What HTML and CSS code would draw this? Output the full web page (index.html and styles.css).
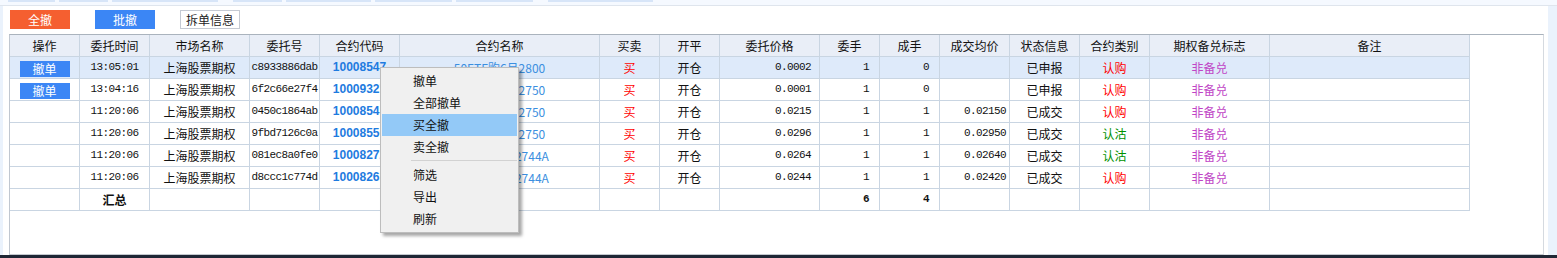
FILE: index.html
```html
<!DOCTYPE html>
<html lang="zh-CN">
<head>
<meta charset="UTF-8" />
<title>委托列表</title>
<link rel="stylesheet" href="styles.css">
</head>
<body>
    <div class="topbar">
        <span class="tab" style="width:47px"></span>
        <span class="tab" style="width:49px"></span>
        <span class="tab" style="width:106px"></span>
        <span class="tab gap" style="width:49px"></span>
        <span class="tab" style="width:85px"></span>
        <span class="tab" style="width:77px"></span>
        <span class="tab" style="width:77px"></span>
        <span class="tab gap" style="width:105px"></span>
    </div>
    <div class="window">
        <div class="toolbar">
            <button class="btn btn-orange">全撤</button>
            <button class="btn btn-blue">批撤</button>
            <button class="btn btn-plain">拆单信息</button>
        </div>
        <div class="panel">
            <table class="grid">
                <colgroup>
                    <col style="width:70px"><col style="width:70px"><col style="width:100px"><col style="width:70px">
                    <col style="width:80px"><col style="width:200px"><col style="width:60px"><col style="width:60px">
                    <col style="width:100px"><col style="width:60px"><col style="width:60px"><col style="width:70px">
                    <col style="width:70px"><col style="width:70px"><col style="width:120px"><col style="width:200px">
                </colgroup>
                <thead>
                    <tr>
                        <th>操作</th><th>委托时间</th><th>市场名称</th><th>委托号</th><th>合约代码</th><th>合约名称</th>
                        <th>买卖</th><th>开平</th><th>委托价格</th><th>委手</th><th>成手</th><th>成交均价</th>
                        <th>状态信息</th><th>合约类别</th><th>期权备兑标志</th><th>备注</th>
                    </tr>
                </thead>
                <tbody>
                    <tr class="selected">
                        <td><span class="cancel">撤单</span></td>
                        <td class="mono">13:05:01</td><td>上海股票期权</td>
                        <td class="mono">c8933886dab</td>
                        <td class="code">10008547</td><td class="name">50ETF购6月2800</td>
                        <td class="red">买</td><td>开仓</td>
                        <td class="mono price">0.0002</td><td class="mono qty">1</td><td class="mono qty">0</td>
                        <td class="mono avg"></td><td>已申报</td><td class="red">认购</td><td class="purple">非备兑</td><td></td>
                    </tr>
                    <tr>
                        <td><span class="cancel">撤单</span></td>
                        <td class="mono">13:04:16</td><td>上海股票期权</td>
                        <td class="mono">6f2c66e27f4</td>
                        <td class="code">10009327</td><td class="name">50ETF购6月2750</td>
                        <td class="red">买</td><td>开仓</td>
                        <td class="mono price">0.0001</td><td class="mono qty">1</td><td class="mono qty">0</td>
                        <td class="mono avg"></td><td>已申报</td><td class="red">认购</td><td class="purple">非备兑</td><td></td>
                    </tr>
                    <tr>
                        <td></td>
                        <td class="mono">11:20:06</td><td>上海股票期权</td>
                        <td class="mono">0450c1864ab</td>
                        <td class="code">10008541</td><td class="name">50ETF购6月2750</td>
                        <td class="red">买</td><td>开仓</td>
                        <td class="mono price">0.0215</td><td class="mono qty">1</td><td class="mono qty">1</td>
                        <td class="mono avg">0.02150</td><td>已成交</td><td class="red">认购</td><td class="purple">非备兑</td><td></td>
                    </tr>
                    <tr>
                        <td></td>
                        <td class="mono">11:20:06</td><td>上海股票期权</td>
                        <td class="mono">9fbd7126c0a</td>
                        <td class="code">10008550</td><td class="name">50ETF沽6月2750</td>
                        <td class="red">买</td><td>开仓</td>
                        <td class="mono price">0.0296</td><td class="mono qty">1</td><td class="mono qty">1</td>
                        <td class="mono avg">0.02950</td><td>已成交</td><td class="green">认沽</td><td class="purple">非备兑</td><td></td>
                    </tr>
                    <tr>
                        <td></td>
                        <td class="mono">11:20:06</td><td>上海股票期权</td>
                        <td class="mono">081ec8a0fe0</td>
                        <td class="code">10008272</td><td class="name">50ETF沽6月2744A</td>
                        <td class="red">买</td><td>开仓</td>
                        <td class="mono price">0.0264</td><td class="mono qty">1</td><td class="mono qty">1</td>
                        <td class="mono avg">0.02640</td><td>已成交</td><td class="green">认沽</td><td class="purple">非备兑</td><td></td>
                    </tr>
                    <tr>
                        <td></td>
                        <td class="mono">11:20:06</td><td>上海股票期权</td>
                        <td class="mono">d8ccc1c774d</td>
                        <td class="code">10008263</td><td class="name">50ETF购6月2744A</td>
                        <td class="red">买</td><td>开仓</td>
                        <td class="mono price">0.0244</td><td class="mono qty">1</td><td class="mono qty">1</td>
                        <td class="mono avg">0.02420</td><td>已成交</td><td class="red">认购</td><td class="purple">非备兑</td><td></td>
                    </tr>
                    <tr class="total">
                        <td></td><td class="bold">汇总</td><td></td><td></td><td></td><td></td><td></td><td></td><td></td>
                        <td class="mono qty bold">6</td><td class="mono qty bold">4</td>
                        <td></td><td></td><td></td><td></td><td></td>
                    </tr>
                </tbody>
            </table>

            <!-- right-click menu over the grid -->
            <ul class="context-menu">
                <li>撤单</li>
                <li>全部撤单</li>
                <li class="active">买全撤</li>
                <li>卖全撤</li>
                <li class="sep"></li>
                <li>筛选</li>
                <li>导出</li>
                <li>刷新</li>
            </ul>
        </div>
    </div>
    <div class="statusline"></div>
</body>
</html>
```

FILE: styles.css
```css
:root {
    --grid-line: #c9d5e2;
    --head-bg: #e9eef7;
    --sel-bg: #deeafa;
    --blue: #3b86f5;
    --orange: #f55f30;
}

body, html {
    margin: 0;
    padding: 0;
    height: 258px;
    overflow: hidden;
    font-family: "Noto Sans CJK SC", "Liberation Sans", sans-serif;
    font-size: 12px;
    background: #eaf2fc;
}

.topbar {
    height: 5px;
    background: #f5f9ff;
    border-bottom: 1px solid #dfe5ed;
    display: flex;
    align-items: flex-start;
    padding-left: 8px;
    gap: 4px;
}

.tab {
    height: 2px;
    background: #d7e5f8;
}

.tab.gap {
    margin-left: 11px;
}

.window {
    height: 249px;
    margin: 0 9px 0 3px;
    background: #fff;
    display: flex;
    flex-direction: column;
}

.toolbar {
    height: 24px;
    padding: 4px 0 0 7px;
    display: flex;
    align-items: flex-start;
    gap: 25px;
}

.btn {
    width: 60px;
    height: 19px;
    padding: 0;
    border: none;
    font-family: "Noto Sans CJK SC", sans-serif;
    font-size: 12px;
    line-height: 19px;
    color: #fff;
    cursor: pointer;
}

.btn-orange {
    background: var(--orange);
}

.btn-blue {
    background: var(--blue);
}

.btn-plain {
    background: #fff;
    color: #222;
    border: 1px solid #c5cad3;
    line-height: 17px;
}

.panel {
    position: relative;
    flex: 1;
    margin: 0 4px 0 6px;
    border-top: 1px solid #aab3bd;
    border-left: 1px solid #c0c7d0;
    border-bottom: 1px solid #c4c9cf;
    border-right: 1px solid #d5dae0;
}

.grid {
    width: 1460px;
    table-layout: fixed;
    border-collapse: separate;
    border-spacing: 0;
}

.grid th,
.grid td {
    height: 21px;
    padding: 0;
    border-right: 1px solid var(--grid-line);
    border-bottom: 1px solid var(--grid-line);
    text-align: center;
    white-space: nowrap;
    overflow: hidden;
    color: #111;
    font-weight: normal;
    line-height: 21px;
}

.grid th {
    background: var(--head-bg);
}

.grid tr.selected td {
    background: var(--sel-bg);
}

.grid td.mono {
    font-family: "Liberation Mono", monospace;
    font-size: 11px;
    letter-spacing: -0.6px;
}

.grid td.code {
    font-family: "Liberation Sans", sans-serif;
    font-weight: bold;
    color: #1e7be0;
}

.grid td.name {
    color: #3b8fe0;
}

.grid td.price {
    text-align: right;
    padding-right: 8px;
}

.grid td.qty {
    text-align: right;
    padding-right: 10px;
}

.grid td.avg {
    text-align: right;
    padding-right: 3px;
}

.grid td.red {
    color: #f00;
}

.grid td.green {
    color: #009100;
}

.grid td.purple {
    color: #c044c6;
}

.grid td.bold {
    font-weight: bold;
}

.cancel {
    display: inline-block;
    width: 50px;
    height: 16px;
    line-height: 16px;
    background: var(--blue);
    color: #fff;
    vertical-align: middle;
    margin-top: -2px;
}

.context-menu {
    position: absolute;
    left: 370px;
    top: 32px;
    width: 135px;
    margin: 0;
    padding: 2px 1px;
    list-style: none;
    background: #f0f0f0;
    border: 1px solid #bdbdbd;
    box-shadow: 3px 3px 3px rgba(0, 0, 0, 0.35);
}

.context-menu li {
    height: 22px;
    line-height: 22px;
    padding-left: 31px;
    color: #111;
}

.context-menu li.active {
    background: #93c9f7;
}

.context-menu li.sep {
    height: 1px;
    margin: 2px 0 3px 29px;
    padding: 0;
    background: #d2d2d2;
}

.statusline {
    height: 3px;
    background: #1f2735;
}
```
